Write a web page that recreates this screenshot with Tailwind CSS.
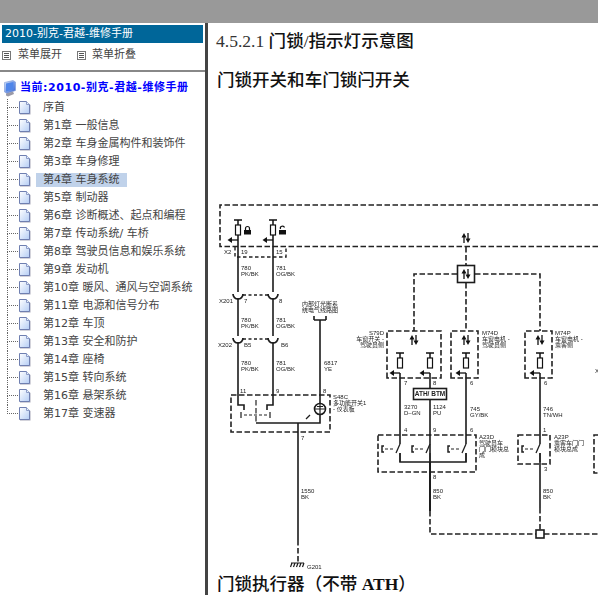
<!doctype html>
<html>
<head>
<meta charset="utf-8">
<script src="https://cdn.jsdelivr.net/npm/@tailwindcss/browser@4"></script>
</head>
<body class="bg-white overflow-hidden">
<svg width="0" height="0" class="absolute">
  <defs>
    <linearGradient id="pg" x1="0" y1="0" x2="1" y2="1"><stop offset="0" stop-color="#ffffff"/><stop offset="1" stop-color="#b4cdf5"/></linearGradient>
    <linearGradient id="pc" x1="0" y1="0" x2="1" y2="1"><stop offset="0" stop-color="#d4e4fb"/><stop offset="1" stop-color="#2f5fd0"/></linearGradient>
    <symbol id="page" viewBox="0 0 13 14">
      <path d="M2 13.500H12.500V4L9 1H2Z" fill="#a8a8b8"/>
      <path d="M1.500 .5H8.500L11.500 3.500V12.500H1.500Z" fill="url(#pg)" stroke="#6f7fb0"/>
      <path d="M8.500 .5V3.500H11.500" fill="#e8f0fc" stroke="#8c9cc8"/>
    </symbol>
    <g id="fuse" fill="none" stroke="#111">
      <path d="M-4 0H4M0 0V5" stroke-width="1.500"/>
      <rect x="-2.500" y="5" width="5" height="10" fill="#fff" stroke-width="1.200"/>
      <path d="M0 20H-7" stroke-width="1.300"/>
      <path d="M-10.500 20L-6 17V23Z" fill="#111" stroke="none"/>
    </g>
    <g id="updown" fill="none" stroke="#111" stroke-width="1.300">
      <path d="M-2 10V2M2 0V8"/>
      <path d="M-2 0L-4.500 4.500H.5ZM2 10L-.5 5.500H4.500Z" fill="#111" stroke="none"/>
    </g>
    <g id="switch" fill="none" stroke="#222">
      <path d="M-16 -3H-18V3H-16" stroke-width="1.500"/>
      <path d="M-15 0H-5" stroke-width="1.200" stroke-dasharray="3 2"/>
      <path d="M0 -5L-4 4M0 4V13" stroke-width="1.300"/>
    </g>
  </defs>
</svg>

<div class="h-[595px] w-[598px] flex flex-col overflow-hidden font-['DejaVu_Sans','Noto_Sans_CJK_SC',sans-serif] text-[11px] text-[#444]">
  <div class="h-[23px] shrink-0 bg-[#999999]"></div>
  <div class="flex flex-1 min-h-0">
    <aside class="w-[208px] shrink-0 flex flex-col border-r-[3px] border-[#444]">
      <div class="mx-[2px] mt-[2px] h-[18px] leading-[18px] px-[3px] bg-[#006699] text-white">2010-别克-君越-维修手册</div>
      <div class="flex items-center h-[16px] mt-[4px] pl-[2px]">
        <svg width="9" height="9" viewBox="0 0 9 9" class="shrink-0"><rect x=".5" y=".5" width="8" height="8" fill="#fff" stroke="#777"/><path d="M2 2.500H7M2 4.500H7M2 6.500H7" stroke="#555"/></svg>
        <span class="ml-[7px] w-[59px]">菜单展开</span>
        <svg width="9" height="9" viewBox="0 0 9 9" class="shrink-0"><rect x=".5" y=".5" width="8" height="8" fill="#fff" stroke="#777"/><path d="M2 2.500H7M2 4.500H7M2 6.500H7" stroke="#555"/></svg>
        <span class="ml-[6px]">菜单折叠</span>
      </div>
      <div class="h-[2px] mt-[7px] bg-[#888888]"></div>
      <div class="flex items-center h-[18px] mt-[7px] pl-[3px]">
        <svg width="13" height="17" viewBox="0 0 13 17" class="shrink-0">
          <path d="M1.500 2.500L10 .5L12.500 2V10.500L4 13.500L1.500 12Z" fill="url(#pc)" stroke="#7c9bd8" stroke-width=".6"/>
          <path d="M3 3.500L10.500 2V9.500L3 11.500Z" fill="#4f86ea"/>
          <path d="M3 13.500L10 11.500L11 14L5 16.500L3 15.500Z" fill="#9a9aa8"/>
        </svg>
        <span class="ml-[4px] font-bold text-[#0000ff] tracking-[0.55px] whitespace-nowrap">当前:2010-别克-君越-维修手册</span>
      </div>
      <ul class="mt-[2px]">
        <li class="flex items-center h-[18px] pl-[7px]"><div class="w-[11px] h-full flex flex-col shrink-0"><div class="h-[9px] border-l border-b border-dotted border-[#666]"></div><div class="h-[9px] border-l border-dotted border-[#666]"></div></div><svg width="13" height="14" class="shrink-0"><use href="#page"/></svg><span class="ml-[5px] px-[7px] h-[14px] leading-[14px] whitespace-nowrap">序首</span></li>
        <li class="flex items-center h-[18px] pl-[7px]"><div class="w-[11px] h-full flex flex-col shrink-0"><div class="h-[9px] border-l border-b border-dotted border-[#666]"></div><div class="h-[9px] border-l border-dotted border-[#666]"></div></div><svg width="13" height="14" class="shrink-0"><use href="#page"/></svg><span class="ml-[5px] px-[7px] h-[14px] leading-[14px] whitespace-nowrap">第1章 一般信息</span></li>
        <li class="flex items-center h-[18px] pl-[7px]"><div class="w-[11px] h-full flex flex-col shrink-0"><div class="h-[9px] border-l border-b border-dotted border-[#666]"></div><div class="h-[9px] border-l border-dotted border-[#666]"></div></div><svg width="13" height="14" class="shrink-0"><use href="#page"/></svg><span class="ml-[5px] px-[7px] h-[14px] leading-[14px] whitespace-nowrap">第2章 车身金属构件和装饰件</span></li>
        <li class="flex items-center h-[18px] pl-[7px]"><div class="w-[11px] h-full flex flex-col shrink-0"><div class="h-[9px] border-l border-b border-dotted border-[#666]"></div><div class="h-[9px] border-l border-dotted border-[#666]"></div></div><svg width="13" height="14" class="shrink-0"><use href="#page"/></svg><span class="ml-[5px] px-[7px] h-[14px] leading-[14px] whitespace-nowrap">第3章 车身修理</span></li>
        <li class="flex items-center h-[18px] pl-[7px]"><div class="w-[11px] h-full flex flex-col shrink-0"><div class="h-[9px] border-l border-b border-dotted border-[#666]"></div><div class="h-[9px] border-l border-dotted border-[#666]"></div></div><svg width="13" height="14" class="shrink-0"><use href="#page"/></svg><span class="ml-[5px] px-[7px] h-[14px] leading-[14px] whitespace-nowrap bg-[#c0d2ea]">第4章 车身系统</span></li>
        <li class="flex items-center h-[18px] pl-[7px]"><div class="w-[11px] h-full flex flex-col shrink-0"><div class="h-[9px] border-l border-b border-dotted border-[#666]"></div><div class="h-[9px] border-l border-dotted border-[#666]"></div></div><svg width="13" height="14" class="shrink-0"><use href="#page"/></svg><span class="ml-[5px] px-[7px] h-[14px] leading-[14px] whitespace-nowrap">第5章 制动器</span></li>
        <li class="flex items-center h-[18px] pl-[7px]"><div class="w-[11px] h-full flex flex-col shrink-0"><div class="h-[9px] border-l border-b border-dotted border-[#666]"></div><div class="h-[9px] border-l border-dotted border-[#666]"></div></div><svg width="13" height="14" class="shrink-0"><use href="#page"/></svg><span class="ml-[5px] px-[7px] h-[14px] leading-[14px] whitespace-nowrap">第6章 诊断概述、起点和编程</span></li>
        <li class="flex items-center h-[18px] pl-[7px]"><div class="w-[11px] h-full flex flex-col shrink-0"><div class="h-[9px] border-l border-b border-dotted border-[#666]"></div><div class="h-[9px] border-l border-dotted border-[#666]"></div></div><svg width="13" height="14" class="shrink-0"><use href="#page"/></svg><span class="ml-[5px] px-[7px] h-[14px] leading-[14px] whitespace-nowrap">第7章 传动系统/ 车桥</span></li>
        <li class="flex items-center h-[18px] pl-[7px]"><div class="w-[11px] h-full flex flex-col shrink-0"><div class="h-[9px] border-l border-b border-dotted border-[#666]"></div><div class="h-[9px] border-l border-dotted border-[#666]"></div></div><svg width="13" height="14" class="shrink-0"><use href="#page"/></svg><span class="ml-[5px] px-[7px] h-[14px] leading-[14px] whitespace-nowrap">第8章 驾驶员信息和娱乐系统</span></li>
        <li class="flex items-center h-[18px] pl-[7px]"><div class="w-[11px] h-full flex flex-col shrink-0"><div class="h-[9px] border-l border-b border-dotted border-[#666]"></div><div class="h-[9px] border-l border-dotted border-[#666]"></div></div><svg width="13" height="14" class="shrink-0"><use href="#page"/></svg><span class="ml-[5px] px-[7px] h-[14px] leading-[14px] whitespace-nowrap">第9章 发动机</span></li>
        <li class="flex items-center h-[18px] pl-[7px]"><div class="w-[11px] h-full flex flex-col shrink-0"><div class="h-[9px] border-l border-b border-dotted border-[#666]"></div><div class="h-[9px] border-l border-dotted border-[#666]"></div></div><svg width="13" height="14" class="shrink-0"><use href="#page"/></svg><span class="ml-[5px] px-[7px] h-[14px] leading-[14px] whitespace-nowrap">第10章 暖风、通风与空调系统</span></li>
        <li class="flex items-center h-[18px] pl-[7px]"><div class="w-[11px] h-full flex flex-col shrink-0"><div class="h-[9px] border-l border-b border-dotted border-[#666]"></div><div class="h-[9px] border-l border-dotted border-[#666]"></div></div><svg width="13" height="14" class="shrink-0"><use href="#page"/></svg><span class="ml-[5px] px-[7px] h-[14px] leading-[14px] whitespace-nowrap">第11章 电源和信号分布</span></li>
        <li class="flex items-center h-[18px] pl-[7px]"><div class="w-[11px] h-full flex flex-col shrink-0"><div class="h-[9px] border-l border-b border-dotted border-[#666]"></div><div class="h-[9px] border-l border-dotted border-[#666]"></div></div><svg width="13" height="14" class="shrink-0"><use href="#page"/></svg><span class="ml-[5px] px-[7px] h-[14px] leading-[14px] whitespace-nowrap">第12章 车顶</span></li>
        <li class="flex items-center h-[18px] pl-[7px]"><div class="w-[11px] h-full flex flex-col shrink-0"><div class="h-[9px] border-l border-b border-dotted border-[#666]"></div><div class="h-[9px] border-l border-dotted border-[#666]"></div></div><svg width="13" height="14" class="shrink-0"><use href="#page"/></svg><span class="ml-[5px] px-[7px] h-[14px] leading-[14px] whitespace-nowrap">第13章 安全和防护</span></li>
        <li class="flex items-center h-[18px] pl-[7px]"><div class="w-[11px] h-full flex flex-col shrink-0"><div class="h-[9px] border-l border-b border-dotted border-[#666]"></div><div class="h-[9px] border-l border-dotted border-[#666]"></div></div><svg width="13" height="14" class="shrink-0"><use href="#page"/></svg><span class="ml-[5px] px-[7px] h-[14px] leading-[14px] whitespace-nowrap">第14章 座椅</span></li>
        <li class="flex items-center h-[18px] pl-[7px]"><div class="w-[11px] h-full flex flex-col shrink-0"><div class="h-[9px] border-l border-b border-dotted border-[#666]"></div><div class="h-[9px] border-l border-dotted border-[#666]"></div></div><svg width="13" height="14" class="shrink-0"><use href="#page"/></svg><span class="ml-[5px] px-[7px] h-[14px] leading-[14px] whitespace-nowrap">第15章 转向系统</span></li>
        <li class="flex items-center h-[18px] pl-[7px]"><div class="w-[11px] h-full flex flex-col shrink-0"><div class="h-[9px] border-l border-b border-dotted border-[#666]"></div><div class="h-[9px] border-l border-dotted border-[#666]"></div></div><svg width="13" height="14" class="shrink-0"><use href="#page"/></svg><span class="ml-[5px] px-[7px] h-[14px] leading-[14px] whitespace-nowrap">第16章 悬架系统</span></li>
        <li class="flex items-center h-[18px] pl-[7px]"><div class="w-[11px] h-full flex flex-col shrink-0"><div class="h-[9px] border-l border-b border-dotted border-[#666]"></div></div><svg width="13" height="14" class="shrink-0"><use href="#page"/></svg><span class="ml-[5px] px-[7px] h-[14px] leading-[14px] whitespace-nowrap">第17章 变速器</span></li>
      </ul>
    </aside>

    <main class="flex-1 min-w-0 overflow-hidden font-['Liberation_Serif','Noto_Sans_CJK_SC',serif] text-[#111]">
      <h1 class="mt-[6px] pl-[8px] h-[24px] leading-[24px] text-[17.55px] whitespace-nowrap"><span class="text-[#333]">4.5.2.1</span> <span class="font-medium">门锁/指示灯示意图</span></h1>
      <h2 class="mt-[15px] pl-[9px] h-[24px] leading-[24px] text-[17.55px] font-medium whitespace-nowrap">门锁开关和车门锁闩开关</h2>
      <svg width="390" height="380" viewBox="208 190 390 380" class="block mt-[98px] blur-[0.4px] font-['Liberation_Sans','Noto_Sans_CJK_SC',sans-serif]">
        <g fill="none" stroke="#222" stroke-width="1.600" stroke-dasharray="5.500 2.500">
          <path d="M598 205H220V246.500H598"/>
          <path d="M235 247V257H286V247" stroke-width="1.400" stroke-dasharray="3.500 2.500"/>
          <path d="M243 295H268M243 339H268" stroke-width="1.300" stroke-dasharray="3 2.500"/>
          <path d="M231 395H330V432H231Z"/>
          <path d="M466 247V265M466 283V331M457 274H414V331M475 274H540V331"/>
          <path d="M387 378V331H441V378H387ZM451 378V331H478V378H451ZM525 378V331H552V378H525Z"/>
          <path d="M378 435H476V472H378ZM518 435H550V464H518Z"/>
          <path d="M598 435H594V473H598"/>
          <path d="M430 511V534H536M544 534H598M540 508V530" />
          <path d="M298 540V562"/>
          <path d="M256 400V423" stroke-width="1.200"/>
          <path d="M244 415H267" stroke-width="1.200" stroke-dasharray="3 2"/>
        </g>
        <g fill="none" stroke="#1c1c1c" stroke-width="1.600">
          <path d="M238 235V292M238 298V336M238 342V395V405H244V410M273 235V292M273 298V336M273 342V395V405H267V410"/>
          <path d="M320 320V404M320 414V423H256M298 423V540"/>
          <path d="M314 320V316M326 320V316M314 320H326"/>
          <path d="M233 294A5 5 0 0 0 243 294M268 294A5 5 0 0 0 278 294M233 338A5 5 0 0 0 243 338M268 338A5 5 0 0 0 278 338" stroke-width="1.700"/>
          <path d="M400 373V444M430 373V388M430 399V462M466 373V444M400 453V462H466V453M540 373V444M540 453V508"/>
          <path d="M430 462V511" stroke-width="2"/>
          <circle cx="320" cy="409" r="5.500"/>
          <path d="M315 409H325M320 404V414M317 406.500H323" stroke-width="1.200"/>
          <path d="M310 415L306 419" stroke-width="1.200"/>
          <path d="M241 412V418M270 412V418" stroke-width="1.200"/>
          <rect x="413.500" y="388.500" width="33" height="11"/>
          <rect x="457.500" y="265.500" width="17" height="17"/>
          <rect x="536" y="530" width="8" height="8" fill="#fff"/>
          <path d="M291 563H304M292 563L290.500 567M295 563L293.500 567M298 563L296.500 567M301 563L299.500 567M304 563L302.500 567" stroke-width="1.200"/>
        </g>
        <use href="#fuse" x="238" y="220"/><use href="#fuse" x="273" y="220"/>
        <use href="#fuse" x="400" y="353"/><use href="#fuse" x="430" y="353"/><use href="#fuse" x="466" y="353"/><use href="#fuse" x="540" y="353"/>
        <use href="#updown" x="466" y="233"/><use href="#updown" x="466" y="269"/><use href="#updown" x="414" y="335"/><use href="#updown" x="466" y="335"/><use href="#updown" x="540" y="335"/>
        <use href="#switch" x="400" y="449"/><use href="#switch" x="430" y="449"/><use href="#switch" x="466" y="449"/><use href="#switch" x="540" y="449"/>
        <g fill="#111">
          <path d="M244 230H251V234.500H244Z"/><path d="M245.500 230V228.500A2 2 0 0 1 249.500 228.500V230" fill="none" stroke="#111" stroke-width="1.200"/>
          <path d="M279 230H286V234.500H279Z"/><path d="M280.500 229A2 2 0 0 1 284.500 227.500" fill="none" stroke="#111" stroke-width="1.200"/>
        </g>
        <g font-size="6" fill="#222">
          <text x="224" y="254">X2</text><text x="241" y="254">19</text><text x="276" y="254">15</text>
          <text x="241" y="270">780</text><text x="241" y="276">PK/BK</text><text x="276" y="270">781</text><text x="276" y="276">OG/BK</text>
          <text x="219" y="303">X201</text><text x="244" y="303">7</text><text x="279" y="303">8</text>
          <text x="241" y="322">780</text><text x="241" y="328">PK/BK</text><text x="276" y="322">781</text><text x="276" y="328">OG/BK</text>
          <text x="218" y="347">X202</text><text x="244" y="347">B5</text><text x="281" y="347">B6</text>
          <text x="241" y="365">780</text><text x="241" y="371">PK/BK</text><text x="276" y="365">781</text><text x="276" y="371">OG/BK</text>
          <text x="324" y="365">6817</text><text x="324" y="371">YE</text>
          <text x="320" y="306" text-anchor="middle">内部灯光断系</text><text x="320" y="312" text-anchor="middle">统电气线路图</text>
          <text x="240" y="393">11</text><text x="276" y="393">9</text><text x="323" y="393">8</text>
          <text x="333" y="399">S48C</text><text x="333" y="405">多功能开关1</text><text x="333" y="411">- 仪表板</text>
          <text x="301" y="440">7</text><text x="301" y="493">1550</text><text x="301" y="499">BK</text><text x="307" y="569">G201</text>
          <text x="384" y="335" text-anchor="end">S79D</text><text x="384" y="341" text-anchor="end">车窗开关 -</text><text x="384" y="347" text-anchor="end">驾驶员侧</text>
          <text x="482" y="335">M74D</text><text x="482" y="341">车窗电机 -</text><text x="482" y="347">驾驶员侧</text>
          <text x="555" y="335">M74P</text><text x="555" y="341">车窗电机 -</text><text x="555" y="347">乘客侧</text>
          <text x="404" y="385">7</text><text x="433" y="385">8</text><text x="470" y="385">6</text><text x="544" y="385">6</text>
          <text x="430" y="396" text-anchor="middle" font-size="6.500" font-weight="bold">ATH/ BTM</text>
          <text x="404" y="409">3270</text><text x="404" y="415">D–GN</text><text x="433" y="409">1124</text><text x="433" y="415">PU</text>
          <text x="470" y="411">745</text><text x="470" y="417">GY/BK</text><text x="543" y="411">746</text><text x="543" y="417">TN/WH</text>
          <text x="404" y="432">4</text><text x="433" y="432">9</text><text x="470" y="432">6</text><text x="543" y="432">1</text>
          <text x="479" y="439">A23D</text><text x="479" y="445">驾驶员车</text><text x="479" y="451">门门模块总</text><text x="479" y="457">成</text>
          <text x="554" y="439">A23P</text><text x="554" y="445">乘客车门门</text><text x="554" y="451">模块总成</text>
          <text x="433" y="479">8</text><text x="544" y="471">3</text>
          <text x="433" y="493">850</text><text x="433" y="499">BK</text><text x="543" y="493">850</text><text x="543" y="499">BK</text>
          <text x="595" y="373">X</text>
        </g>
      </svg>
      <h2 class="mt-[2px] pl-[9px] h-[24px] leading-[24px] text-[17.55px] font-medium whitespace-nowrap">门锁执行器（不带 <b>ATH</b>）</h2>
    </main>
  </div>
</div>
</body>
</html>
